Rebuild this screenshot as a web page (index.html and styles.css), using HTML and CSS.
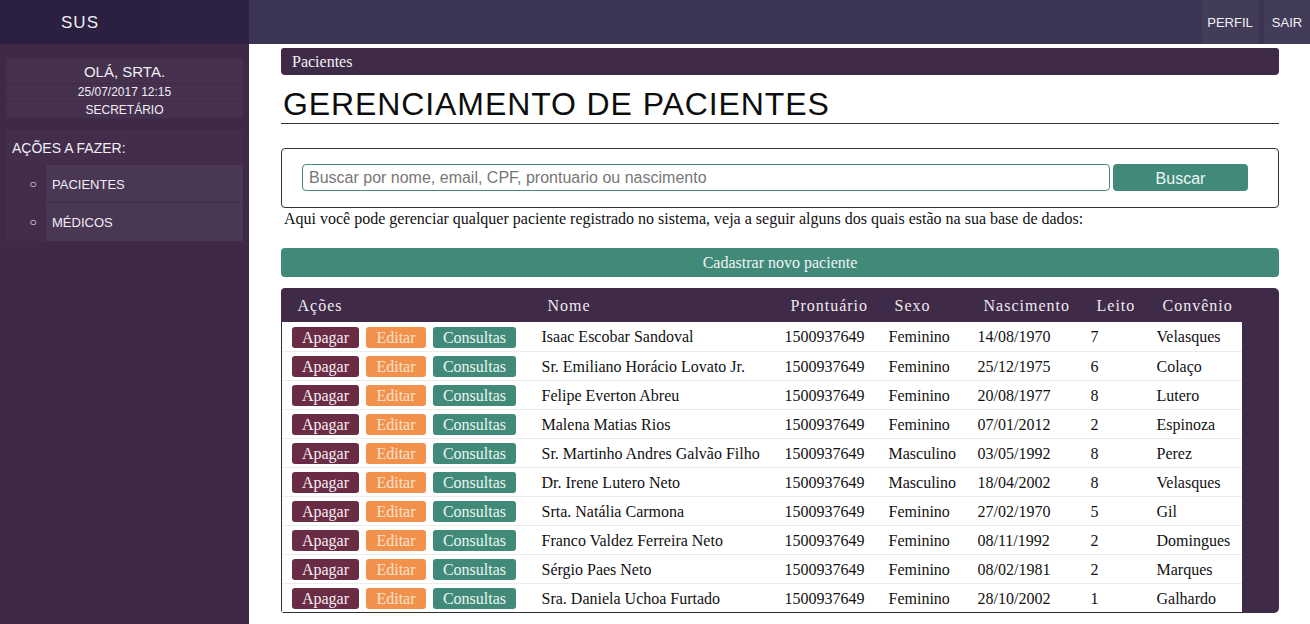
FILE: index.html
```html
<!DOCTYPE html>
<html lang="pt-BR">
<head>
<meta charset="utf-8">
<title>SUS - Pacientes</title>
<link rel="stylesheet" href="styles.css">
</head>
<body>
<header class="topbar">
  <div class="brand"><div class="logo">SUS</div><div class="brand-rest"></div></div>
  <nav class="topnav">
    <a class="navbtn perfil">PERFIL</a>
    <a class="navbtn sair">SAIR</a>
  </nav>
</header>
<div class="layout">
  <aside class="sidebar">
    <div class="userbox">
      <div class="user-name">OLÁ, SRTA.</div>
      <div class="user-line">25/07/2017 12:15</div>
      <div class="user-line">SECRETÁRIO</div>
    </div>
    <div class="actions">
      <div class="actions-title">AÇÕES A FAZER:</div>
      <div class="action-item"><span class="bullet">○</span><span class="action-label">PACIENTES</span></div>
      <div class="action-item"><span class="bullet">○</span><span class="action-label">MÉDICOS</span></div>
    </div>
  </aside>
  <main class="content">
    <div class="breadcrumb">Pacientes</div>
    <h1 class="title">GERENCIAMENTO DE PACIENTES</h1>
    <div class="searchbox">
      <input class="search-input" type="text" placeholder="Buscar por nome, email, CPF, prontuario ou nascimento">
      <button class="search-btn">Buscar</button>
    </div>
    <p class="intro">Aqui você pode gerenciar qualquer paciente registrado no sistema, veja a seguir alguns dos quais estão na sua base de dados:</p>
    <button class="new-btn">Cadastrar novo paciente</button>
    <div class="table-wrap">
      <table class="patients">
        <colgroup>
          <col class="c-acoes"><col class="c-nome"><col class="c-pront"><col class="c-sexo"><col class="c-nasc"><col class="c-leito"><col class="c-conv">
        </colgroup>
        <thead>
          <tr><th>Ações</th><th>Nome</th><th>Prontuário</th><th>Sexo</th><th>Nascimento</th><th>Leito</th><th>Convênio</th></tr>
        </thead>
        <tbody>
          <tr><td class="acts"><span class="b apagar">Apagar</span><span class="b editar">Editar</span><span class="b consultas">Consultas</span></td><td>Isaac Escobar Sandoval</td><td>1500937649</td><td>Feminino</td><td>14/08/1970</td><td>7</td><td>Velasques</td></tr>
          <tr><td class="acts"><span class="b apagar">Apagar</span><span class="b editar">Editar</span><span class="b consultas">Consultas</span></td><td>Sr. Emiliano Horácio Lovato Jr.</td><td>1500937649</td><td>Feminino</td><td>25/12/1975</td><td>6</td><td>Colaço</td></tr>
          <tr><td class="acts"><span class="b apagar">Apagar</span><span class="b editar">Editar</span><span class="b consultas">Consultas</span></td><td>Felipe Everton Abreu</td><td>1500937649</td><td>Feminino</td><td>20/08/1977</td><td>8</td><td>Lutero</td></tr>
          <tr><td class="acts"><span class="b apagar">Apagar</span><span class="b editar">Editar</span><span class="b consultas">Consultas</span></td><td>Malena Matias Rios</td><td>1500937649</td><td>Feminino</td><td>07/01/2012</td><td>2</td><td>Espinoza</td></tr>
          <tr><td class="acts"><span class="b apagar">Apagar</span><span class="b editar">Editar</span><span class="b consultas">Consultas</span></td><td>Sr. Martinho Andres Galvão Filho</td><td>1500937649</td><td>Masculino</td><td>03/05/1992</td><td>8</td><td>Perez</td></tr>
          <tr><td class="acts"><span class="b apagar">Apagar</span><span class="b editar">Editar</span><span class="b consultas">Consultas</span></td><td>Dr. Irene Lutero Neto</td><td>1500937649</td><td>Masculino</td><td>18/04/2002</td><td>8</td><td>Velasques</td></tr>
          <tr><td class="acts"><span class="b apagar">Apagar</span><span class="b editar">Editar</span><span class="b consultas">Consultas</span></td><td>Srta. Natália Carmona</td><td>1500937649</td><td>Feminino</td><td>27/02/1970</td><td>5</td><td>Gil</td></tr>
          <tr><td class="acts"><span class="b apagar">Apagar</span><span class="b editar">Editar</span><span class="b consultas">Consultas</span></td><td>Franco Valdez Ferreira Neto</td><td>1500937649</td><td>Feminino</td><td>08/11/1992</td><td>2</td><td>Domingues</td></tr>
          <tr><td class="acts"><span class="b apagar">Apagar</span><span class="b editar">Editar</span><span class="b consultas">Consultas</span></td><td>Sérgio Paes Neto</td><td>1500937649</td><td>Feminino</td><td>08/02/1981</td><td>2</td><td>Marques</td></tr>
          <tr><td class="acts"><span class="b apagar">Apagar</span><span class="b editar">Editar</span><span class="b consultas">Consultas</span></td><td>Sra. Daniela Uchoa Furtado</td><td>1500937649</td><td>Feminino</td><td>28/10/2002</td><td>1</td><td>Galhardo</td></tr>
        </tbody>
      </table>
    </div>
  </main>
</div>
</body>
</html>
```

FILE: styles.css
```css
* { box-sizing: border-box; }
html, body { margin: 0; padding: 0; }
body {
  width: 1310px;
  height: 624px;
  overflow: hidden;
  background: #fff;
  font-family: "Liberation Serif", "Times New Roman", serif;
  color: #111;
}

/* top bar */
.topbar {
  display: flex;
  height: 44px;
  background: #3b3452;
}
.brand { display: flex; width: 249px; background: #2d2141; }
.logo {
  width: 160px;
  display: flex;
  align-items: center;
  justify-content: center;
  padding-top: 1px;
  font-family: "Liberation Sans", Arial, sans-serif;
  font-size: 17px;
  letter-spacing: 1px;
  color: #f0eef4;
  background: #2b2040;
}
.brand-rest { flex: 1; }
.topnav { flex: 1; display: flex; justify-content: flex-end; gap: 6px; }
.navbtn {
  display: flex;
  align-items: center;
  justify-content: center;
  height: 44px;
  background: #433c59;
  color: #f2f0f6;
  font-family: "Liberation Sans", Arial, sans-serif;
  font-size: 13px;
}
.perfil { width: 56px; }
.sair { width: 46px; }

/* layout */
.layout { display: flex; height: 580px; }
.sidebar {
  width: 249px;
  flex: none;
  background: #3e2a46;
  padding: 14px 6px 0 6px;
  font-family: "Liberation Sans", Arial, sans-serif;
  color: #f1edf3;
}
.userbox {
  background: #45314e;
  text-align: center;
}
.user-name {
  height: 26px;
  line-height: 27px;
  font-size: 15px;
  border-bottom: 1px solid #3f2b48;
}
.user-line {
  height: 17px;
  line-height: 17px;
  font-size: 12px;
}
.user-line + .user-line { border-top: 1px solid #3f2b48; }
.actions { margin-top: 12px; background: #422e4b; }
.actions-title {
  height: 35px;
  line-height: 36px;
  padding-left: 6px;
  font-size: 14px;
}
.action-item {
  display: flex;
  height: 38px;
  align-items: center;
  border-bottom: 1px solid #3f2b48;
}
.action-item:last-child { border-bottom: none; height: 38px; }
.bullet {
  width: 40px;
  height: 100%;
  display: flex;
  align-items: center;
  justify-content: center;
  padding-left: 14px;
  font-size: 12px;
  background: #412d4a;
}
.action-label {
  flex: 1;
  height: 100%;
  display: flex;
  align-items: center;
  padding-left: 6px;
  padding-top: 1px;
  font-size: 13px;
  background: #4a3753;
}

/* content */
.content {
  flex: 1;
  padding: 4px 31px 0 32px;
}
.breadcrumb {
  height: 27px;
  line-height: 27px;
  padding-left: 11px;
  background: #3f2a47;
  color: #f5f2f6;
  font-size: 16px;
  border-radius: 3px 3px 4px 4px;
}
.title {
  margin: 12px 0 0 0;
  padding: 1px 0 3px 2px;
  font-family: "Liberation Sans", Arial, sans-serif;
  font-weight: normal;
  font-size: 32px;
  line-height: 32px;
  letter-spacing: 0.9px;
  color: #0d0d0d;
  border-bottom: 1px solid #333;
}
.searchbox {
  margin-top: 24px;
  height: 60px;
  border: 1px solid #333;
  border-radius: 4px;
  padding: 15px 0 0 20px;
  display: flex;
  gap: 3px;
}
.search-input {
  width: 808px;
  height: 27px;
  border: 1px solid #4a8a7d;
  border-radius: 4px;
  padding: 0 6px;
  font-family: "Liberation Sans", Arial, sans-serif;
  font-size: 16px;
  color: #333;
  outline: none;
}
.search-input::placeholder { color: #777; }
.search-btn {
  width: 135px;
  height: 27px;
  border: none;
  border-radius: 4px;
  background: #418a7a;
  color: #eef7f4;
  font-family: "Liberation Sans", Arial, sans-serif;
  font-size: 16px;
  padding: 3px 0 0 0;
}
.intro {
  margin: 0;
  padding: 1px 0 0 3px;
  height: 40px;
  font-size: 16px;
  line-height: 20px;
  color: #111;
}
.new-btn {
  display: block;
  width: 100%;
  height: 29px;
  border: none;
  border-radius: 4px;
  background: #418a7a;
  color: #eef5f2;
  font-family: "Liberation Serif", "Times New Roman", serif;
  font-size: 16px;
  padding: 0;
}
.table-wrap {
  margin-top: 11px;
  background: #3f2a47;
  border-radius: 4px 5px 5px 4px;
  height: 325px;
  overflow: hidden;
}
.patients {
  width: 960px;
  border-collapse: collapse;
  table-layout: fixed;
}
.c-acoes { width: 250px; }
.c-nome { width: 243px; }
.c-pront { width: 104px; }
.c-sexo { width: 89px; }
.c-nasc { width: 113px; }
.c-leito { width: 66px; }
.c-conv { width: 95px; }
.patients th {
  height: 34px;
  padding: 1px 0 0 16px;
  text-align: left;
  font-weight: normal;
  font-size: 16px;
  letter-spacing: 1px;
  color: #eeeaf0;
}
.patients tbody tr { background: #fff; }
.patients tbody tr td:first-child { border-left: 1px solid #2e2e2e; }
.patients tbody tr:last-child td { border-bottom: 1px solid #2e2e2e; }
.patients td {
  height: 29px;
  padding: 2px 0 0 10px;
  font-size: 16px;
  color: #111;
  border-top: 1px solid #ececec;
  white-space: nowrap;
}
.patients tbody tr:first-child td { border-top: none; }
.patients td.acts { padding-left: 10px; }
.b {
  display: inline-block;
  height: 21px;
  line-height: 21px;
  border-radius: 3px;
  font-size: 16px;
  vertical-align: middle;
  margin-right: 7px;
}
.apagar { width: 67px; text-align: center; background: #6a2b45; color: #f6eef1; }
.editar { width: 60px; text-align: center; background: #f2914c; color: #fbe3cc; }
.consultas { width: 83px; text-align: center; background: #418a7a; color: #eaf5f1; }
```
